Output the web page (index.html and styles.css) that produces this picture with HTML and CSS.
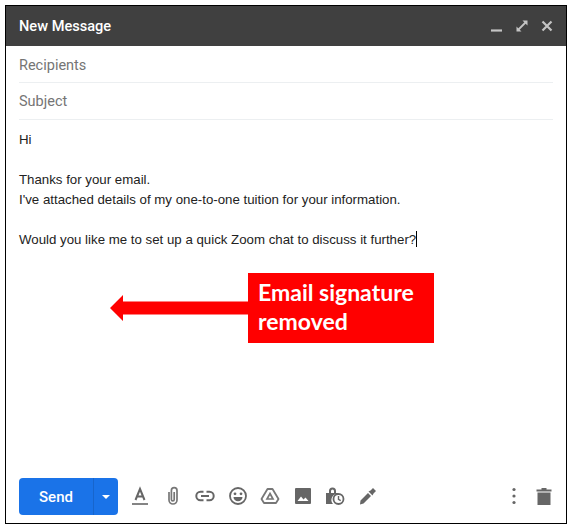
FILE: index.html
```html
<!DOCTYPE html>
<html lang="en">
<head>
<meta charset="utf-8">
<title>New Message</title>
<link rel="stylesheet" href="styles.css">
</head>
<body>
<main class="compose">
  <header class="titlebar">
    <span class="title">New Message</span>
    <div class="window-actions">
      <svg class="win-icon" viewBox="0 0 14 14"><path d="M1 11.500h11" /></svg>
      <svg class="win-icon" viewBox="0 0 14 14"><path class="thin" d="M3 11 11 3" /><path class="fill" d="M7.500 1.500h5v5zM1.500 7.500v5h5z" /></svg>
      <svg class="win-icon" viewBox="0 0 14 14"><path d="M2.500 2.500l9 9M11.500 2.500l-9 9" /></svg>
    </div>
  </header>
  <div class="field field-first"><span>Recipients</span></div>
  <div class="field"><span>Subject</span></div>
  <div class="message">
    <p>Hi</p>
    <p>Thanks for your email.<br>I've attached details of my one-to-one tuition for your information.</p>
    <p>Would you like me to set up a quick Zoom chat to discuss it further?<span class="caret"></span></p>
  </div>
  <footer class="toolbar">
    <div class="send">
      <span class="send-label">Send</span>
      <span class="send-more"><svg viewBox="0 0 10 6" width="10" height="6"><path d="M1 1h8L5 5z" fill="#fff"/></svg></span>
    </div>
    <div class="tools">
      <svg class="tool" viewBox="0 0 20 20"><path d="M5.500 14 10 3l4.500 11M7 10.500h6" fill="none" stroke="#666" stroke-width="2"/><path d="M2 18h16" stroke="#777" stroke-width="1.800"/></svg>
      <svg class="tool" viewBox="0 0 20 20"><path d="M6 6v8a4 4 0 0 0 8 0V4.500a2.800 2.800 0 0 0-5.600 0V13.500a1.400 1.400 0 0 0 2.800 0V6" fill="none" stroke="#777" stroke-width="1.700"/></svg>
      <svg class="tool" viewBox="0 0 20 20"><path d="M8.500 5.800H5.500a4.200 4.200 0 0 0 0 8.400h3M11.500 5.800h3a4.200 4.200 0 0 1 0 8.400h-3M6 10h8" fill="none" stroke="#666" stroke-width="2"/></svg>
      <svg class="tool" viewBox="0 0 20 20"><circle cx="10" cy="10" r="8" fill="none" stroke="#666" stroke-width="1.800"/><circle cx="7" cy="7.800" r="1.400" fill="#666"/><circle cx="13" cy="7.800" r="1.400" fill="#666"/><path d="M5.500 11h9a4.500 4.300 0 0 1-9 0z" fill="#666"/></svg>
      <svg class="tool" viewBox="0 0 20 20"><path d="M7.500 3h5L18.500 13l-2.500 4H4L1.500 13z" fill="none" stroke="#777" stroke-width="1.800" stroke-linejoin="round"/><path d="M10 7.500l3 5.500H7z" fill="none" stroke="#777" stroke-width="1.700"/></svg>
      <svg class="tool" viewBox="0 0 20 20"><rect x="2" y="2" width="16" height="16" rx="1" fill="#666"/><path d="M4.500 15l3.500-4.500 2.500 3 2-2 3 3.500z" fill="#fff"/></svg>
      <svg class="tool" viewBox="0 0 20 20"><path d="M1 7h3V5a3.500 3.500 0 0 1 7 0v2h2v1a6 6 0 0 0-5 10H1z" fill="#666"/><path d="M6 7V5a1.500 1.500 0 0 1 3 0v2z" fill="#fff"/><circle cx="13.500" cy="13" r="5" fill="none" stroke="#666" stroke-width="1.800"/><path d="M13.500 10v3.300l2.200 1.300" fill="none" stroke="#666" stroke-width="1.400"/></svg>
      <svg class="tool" viewBox="0 0 20 20"><path d="M2 18.500l.5-4L10 7l3 3-7.500 7.500zM10.500 5.500l2-1L15 2l3 3-2.500 2.500-1 2z" fill="#666"/></svg>
    </div>
    <div class="end-tools">
      <svg class="more" viewBox="0 0 4 18"><circle cx="2" cy="2.500" r="1.600"/><circle cx="2" cy="9" r="1.600"/><circle cx="2" cy="15.500" r="1.600"/></svg>
      <svg class="trash" viewBox="0 0 16 18"><path d="M0.500 2.500h15v2h-15zM5.500 1h5v2h-5zM1.500 5.500h13V18h-13z" fill="#666"/></svg>
    </div>
  </footer>
  <div class="callout">
    <svg class="arrow" viewBox="0 0 138 26"><path d="M0 13 13 0v6.500h125v13H13V26z" fill="#f00"/></svg>
    <div class="callout-box">Email signature removed</div>
  </div>
</main>
</body>
</html>
```
FILE: styles.css
```css
* { box-sizing: border-box; }
html, body { margin: 0; background: #fff; }
body { padding: 5px 0 0 5px; }
.compose {
  position: relative;
  width: 562px;
  height: 519px;
  border: 1px solid #000;
  display: flex;
  flex-direction: column;
  background: #fff;
}
.titlebar {
  height: 40px;
  flex: none;
  background: #404040;
  color: #fff;
  display: flex;
  align-items: center;
  justify-content: space-between;
  padding: 0 12px 0 13px;
}
.title { font: 500 14.600px Roboto, sans-serif; }
.window-actions { display: flex; gap: 11px; }
.win-icon { width: 14px; height: 14px; fill: none; stroke: #c4c4c4; stroke-width: 2.200px; }
.win-icon .thin { stroke-width: 1.800px; }
.win-icon .fill { fill: #c4c4c4; stroke: none; }
.field {
  margin: 0 13px;
  height: 37px;
  flex: none;
  border-bottom: 1px solid #eceff1;
  display: flex;
  align-items: center;
  font: 14.500px Roboto, sans-serif;
  color: #757575;
}
.field-first { padding-top: 2px; }
.message {
  flex: 1;
  padding: 10px 13px 0;
  font: 13.270px/20px "Liberation Sans", Arial, sans-serif;
  color: #222;
}
.message p { margin: 0 0 20px; }
.caret { display: inline-block; width: 1px; height: 16px; background: #000; vertical-align: -3px; }
.toolbar {
  flex: none;
  height: 52px;
  display: flex;
  align-items: flex-start;
  padding: 7px 14px 0 13px;
}
.send {
  width: 99px;
  height: 37px;
  display: flex;
  background: #1a73e8;
  border-radius: 4px;
  color: #fff;
  font: 500 15px Roboto, sans-serif;
}
.send-label { flex: 1; display: flex; align-items: center; justify-content: center; }
.send-more {
  width: 25px;
  display: flex;
  align-items: center;
  justify-content: center;
  border-left: 1px solid #1765cc;
}
.tools { display: flex; align-items: center; gap: 12.500px; height: 35px; margin-left: 12px; }
.tool { width: 20px; height: 20px; }
.end-tools { margin-left: auto; display: flex; align-items: center; gap: 20px; height: 35px; }
.more { width: 4px; height: 18px; fill: #666; }
.trash { width: 16px; height: 18px; }
.callout {
  position: absolute;
  left: 104px;
  top: 267px;
  display: flex;
  align-items: center;
}
.arrow { width: 138px; height: 26px; flex: none; }
.callout-box {
  width: 186px;
  height: 70px;
  background: #f00;
  color: #fff;
  font: 700 23px/29px Lato, sans-serif;
  padding: 5px 10px;
}
```
